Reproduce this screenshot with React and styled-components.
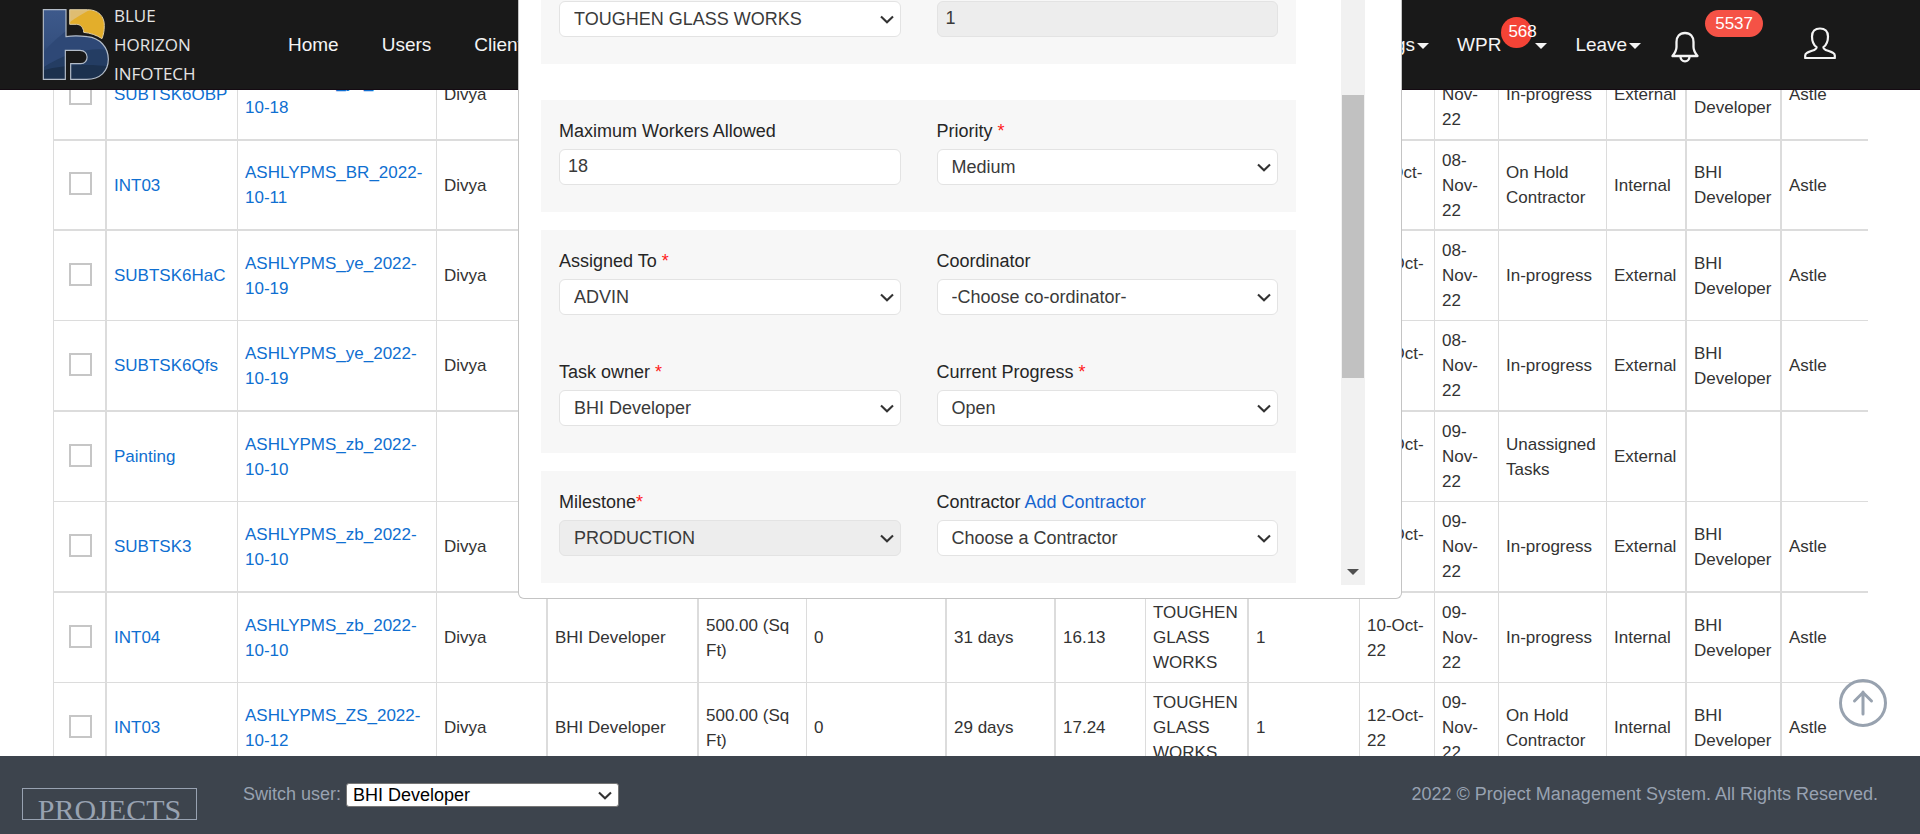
import React from "react";
import styled, { createGlobalStyle } from "styled-components";

const GlobalStyle = createGlobalStyle`
  *, *::before, *::after { box-sizing: border-box; }
  body {
    margin: 0;
    background: #fff;
    color: #333;
    font-family: Arial, "Liberation Sans", sans-serif;
    font-size: 18px;
    line-height: 27px;
  }
  a { color: inherit; text-decoration: none; }
`;

const Page = styled.div`
  height: 100vh;
  display: flex;
  flex-direction: column;
  overflow: hidden;
`;

/* ---------- header ---------- */

const Header = styled.header`
  position: fixed;
  inset: 0 0 auto 0;
  z-index: 2;
  height: 90px;
  padding: 0 84px 0 42px;
  display: flex;
  align-items: center;
  background: #191919;
  border-bottom: 1px solid #140a12;
  color: #f4f4f4;
  font-size: 19px;
`;

const Brand = styled.a`
  display: flex;
  align-items: center;
  gap: 4px;
  width: 246px;
`;

const BrandText = styled.span`
  color: #e4e4e4;
  font-family: "Open Sans", "Noto Sans", sans-serif;
  font-size: 17px;
  line-height: 29px;
`;

const NavGroup = styled.nav`
  height: 90px;
  display: flex;
  align-items: center;
  gap: ${(p) => p.$gap}px;
  margin-left: ${(p) => (p.$end ? "auto" : "0")};
`;

const NavItem = styled.a`
  height: 90px;
  display: flex;
  align-items: center;
  color: #f4f4f4;
  white-space: nowrap;
`;

const Caret = styled.span`
  margin: 3px 0 0 2px;
  border: 6px solid transparent;
  border-top-color: #f4f4f4;
  border-bottom: 0;
`;

const CountDot = styled.span`
  align-self: flex-start;
  width: 31px;
  height: 31px;
  margin-top: 17px;
  margin-right: 1px;
  padding-left: 7px;
  border-radius: 50%;
  background: #f44336;
  color: #fff;
  font-size: 17px;
  line-height: 30px;
`;

const CountPill = styled.span`
  align-self: flex-start;
  height: 27px;
  margin: 10px 0 0 6px;
  padding: 0 10px;
  border-radius: 14px;
  background: #f55246;
  color: #fff;
  font-size: 17px;
  line-height: 27px;
`;

const IconButton = styled.button`
  display: flex;
  padding: ${(p) => (p.$low ? "5px 0 0" : "0 0 4px")};
  border: 0;
  background: none;
  color: #f4f4f4;
  cursor: pointer;
`;

const Alerts = styled.div`
  height: 90px;
  display: flex;
  align-items: center;
  margin-left: 2px;
  margin-right: 13px;
`;

/* ---------- task table ---------- */

const Main = styled.main`
  flex: 1;
  min-height: 0;
  overflow: hidden;
  padding: 50px 52px 0 53px;
`;

const Table = styled.table`
  width: 100%;
  table-layout: fixed;
  border-collapse: separate;
  border-spacing: 0;
  border-left: 1px solid #dcdcdc;
  font-size: 17px;
  line-height: 25px;
`;

const Row = styled.tr`
  height: ${(p) => (p.$tall ? 91 : 90)}px;
`;

const Cell = styled.td`
  padding: 0 2px 0 7px;
  border: 0 solid #dcdcdc;
  border-bottom-width: ${(p) => p.$line}px;
  border-right-width: ${(p) => p.$rule}px;
  vertical-align: middle;
`;

const TaskLink = styled.a`
  color: #0f6fd1;
`;

const TickBox = styled.input`
  appearance: none;
  display: block;
  width: 23px;
  height: 23px;
  margin: 0 auto 3px 8px;
  border: 2px solid #c6c6c6;
  background: #fff;
`;

/* ---------- dialog ---------- */

const Dialog = styled.section`
  position: fixed;
  top: 0;
  left: 50%;
  z-index: 3;
  width: 884px;
  max-width: 100%;
  transform: translateX(-50%);
  display: flex;
  padding: 0 36px 13px 22px;
  background: #fff;
  border: 1px solid #c4c4c4;
  border-top: 0;
  border-radius: 0 0 6px 6px;
`;

const Form = styled.form`
  flex: 1;
  min-width: 0;
  margin: 0 45px 0 0;
  padding-bottom: 2px;
`;

const Panel = styled.div`
  display: grid;
  grid-template-columns: 1fr 1fr;
  gap: 44px 36px;
  margin-bottom: ${(p) => p.$after || 0}px;
  padding: ${(p) => (p.$cut ? 1 : 18)}px 18px 27px;
  background: #f7f7f7;
`;

const Field = styled.div`
  display: flex;
  flex-direction: column;
  gap: 4px;
  min-width: 0;
`;

const Label = styled.label`
  color: #262626;
`;

const Star = styled.span`
  color: #ff1a1a;
`;

const AddLink = styled.a`
  color: #1765cf;
`;

const TextBox = styled.input`
  width: 100%;
  height: 36px;
  padding: 0 8px 1px;
  border: 1px solid #e3e3e3;
  border-radius: 6px;
  background: #fff;
  color: #3a3a3a;
  font: inherit;
  &:disabled { background: #ededed; }
`;

const SelectFrame = styled.div`
  position: relative;
  display: grid;
  color: #333;
`;

const Select = styled.select`
  appearance: none;
  width: 100%;
  height: 36px;
  padding: 0 36px 0 14px;
  border: 1px solid #e3e3e3;
  border-radius: 6px;
  background: #fff;
  color: #3a3a3a;
  font: inherit;
  opacity: 1;
  &:disabled { background: #ededed; }
`;

const SelectArrow = styled.svg`
  position: absolute;
  right: 7px;
  top: 50%;
  width: 14px;
  height: 10px;
  margin-top: -4px;
  pointer-events: none;
`;

const ScrollTrack = styled.div`
  width: 24px;
  display: flex;
  flex-direction: column;
  align-items: center;
  background: #f1f1f1;
`;

const ScrollThumb = styled.div`
  width: 22px;
  height: 283px;
  margin-top: 95px;
  background: #c1c1c1;
`;

const ScrollArrow = styled.span`
  margin: auto 0 10px;
  border: 6px solid transparent;
  border-top-color: #505050;
  border-bottom: 0;
`;

/* ---------- footer ---------- */

const Footer = styled.footer`
  flex: none;
  height: 78px;
  display: flex;
  align-items: flex-start;
  padding: 25px 42px 0 22px;
  background: #3d444d;
  color: #98a2b1;
`;

const ProjectsTag = styled.a`
  width: 175px;
  height: 32px;
  margin-top: 7px;
  overflow: hidden;
  border: 1px solid #98a2b1;
  color: #98a2b1;
  font-family: "Times New Roman", "Liberation Serif", serif;
  font-size: 30px;
  line-height: 42px;
  text-align: center;
`;

const SwitchUser = styled.div`
  display: flex;
  align-items: center;
  gap: 5px;
  margin-left: 46px;
`;

const UserSelect = styled.select`
  appearance: none;
  width: 273px;
  height: 24px;
  padding: 0 24px 0 6px;
  border: 1px solid #767676;
  border-radius: 3px;
  background: #fff;
  color: #000;
  font: inherit;
  line-height: 20px;
`;

const Copyright = styled.span`
  margin-left: auto;
`;

const ToTop = styled.button`
  position: fixed;
  right: 33px;
  bottom: 107px;
  z-index: 1;
  display: flex;
  padding: 0;
  border: 0;
  background: none;
  cursor: pointer;
`;

/* ---------- drawings ---------- */

const Logo = () => (
  <svg width="68" height="74" viewBox="36 24 204 222" aria-hidden="true">
    <defs>
      <linearGradient id="blue" x1="0" y1="0" x2="0" y2="1">
        <stop offset="0" stopColor="#3e5a8c" />
        <stop offset="0.5" stopColor="#35507f" />
        <stop offset="1" stopColor="#1b304e" />
      </linearGradient>
      <clipPath id="bShape">
        <path d="M40 29H108V110C130 106 150 107 172 110C210 114 235 142 235 178C235 214 210 238 170 238H122V191H152C178 191 178 151 150 151H106V238H40Z" />
      </clipPath>
      <clipPath id="sunShape">
        <path d="M119 29H172C206 29 223 50 223 76C223 94 220 105 216 116C200 105 180 99 161 97C161 82 150 73 140 73H119Z" />
      </clipPath>
    </defs>
    <g clipPath="url(#bShape)">
      <rect x="36" y="24" width="204" height="222" fill="url(#blue)" />
      <path d="M36 165C60 130 85 112 112 90L240 110V180C170 160 90 170 36 205Z" fill="#2e4876" />
      <path d="M36 205C100 160 180 140 240 150V246H36Z" fill="#243d63" />
      <path d="M36 212C90 195 180 190 240 200V246H36Z" fill="#1c314e" />
    </g>
    <path d="M40 29H108V110C130 106 150 107 172 110C210 114 235 142 235 178C235 214 210 238 170 238H122V191H152C178 191 178 151 150 151H106V238H40Z" fill="none" stroke="#b3bcc8" strokeWidth="3.5" />
    <g clipPath="url(#sunShape)">
      <rect x="115" y="24" width="115" height="96" fill="#e3ae2b" />
      <path d="M115 24H190C165 38 140 50 115 70Z" fill="#dfbd72" />
    </g>
    <path d="M119 29H172C206 29 223 50 223 76C223 94 220 105 216 116C200 105 180 99 161 97C161 82 150 73 140 73H119Z" fill="none" stroke="#e0cfa4" strokeWidth="3" />
  </svg>
);

const Bell = () => (
  <svg width="28" height="32" viewBox="0 0 28 32" fill="none" stroke="currentColor" strokeWidth="2.3" strokeLinejoin="round" aria-hidden="true">
    <path d="M14 2C8.5 2 5.5 5.8 5.5 11V16C5.5 20 3.5 22.500 1.500 25H26.500C24.500 22.500 22.500 20 22.500 16V11C22.500 5.800 19.500 2 14 2Z" />
    <path d="M9.500 25.500C9.500 28.500 11.500 30.300 14 30.300C16.500 30.300 18.500 28.500 18.500 25.500" />
  </svg>
);

const Person = () => (
  <svg width="32" height="32" viewBox="0 0 32 32" fill="none" stroke="currentColor" strokeWidth="2.2" strokeLinejoin="round" aria-hidden="true">
    <path d="M16 1.500C11 1.500 8 4.500 8 9.500C8 14.500 9.500 18 12.600 20.200C12.600 22 11 22.800 8 23.800C4 25.200 1.200 26 1.200 28.500V31H30.800V28.500C30.800 26 28 25.200 24 23.800C21 22.800 19.400 22 19.400 20.200C22.500 18 24 14.500 24 9.500C24 4.500 21 1.500 16 1.500Z" />
  </svg>
);

const Chevron = () => (
  <SelectArrow viewBox="0 0 14 10" fill="none" stroke="currentColor" strokeWidth="2.1" aria-hidden="true">
    <path d="M1 1.500L7 7.300L13 1.500" />
  </SelectArrow>
);

/* ---------- parts ---------- */

const SelectField = ({ id, label, required, tight, extra, value, disabled }) => (
  <Field>
    {label && (
      <div>
        <Label htmlFor={id}>
          {label}
          {required && <Star>{tight ? "*" : " *"}</Star>}
        </Label>
        {extra && <> <AddLink href="#add">{extra}</AddLink></>}
      </div>
    )}
    <SelectFrame>
      <Select id={id} aria-label={label ? undefined : "Category"} disabled={disabled}>
        <option>{value}</option>
      </Select>
      <Chevron />
    </SelectFrame>
  </Field>
);

/* column width and the thickness of the rule on its right */
const columns = [
  [53, 2], [131, 1], [199, 1], [111, 2], [151, 2], [108, 1], [140, 2], [109, 2],
  [90, 1], [103, 2], [111, 1], [75, 1], [64, 1], [108, 1], [80, 2], [95, 2], [86, 0],
];

/* thickness of the rule under each row */
const rowLines = [2, 2, 1, 2, 1, 2, 1, 2];

const dev = "BHI Developer";
const work = "TOUGHEN GLASS WORKS";
const size = "500.00 (Sq Ft)";

const tasks = [
  ["SUBTSK6OBP", "ASHLYPMS_ye_2022-10-18", "Divya", dev, size, "0", "31 days", "16.13", work, "1", "08-Oct-22", "08-Nov-22", "In-progress", "External", dev, "Astle"],
  ["INT03", "ASHLYPMS_BR_2022-10-11", "Divya", dev, size, "0", "29 days", "17.24", work, "1", "11-Oct-22", "08-Nov-22", "On Hold Contractor", "Internal", dev, "Astle"],
  ["SUBTSK6HaC", "ASHLYPMS_ye_2022-10-19", "Divya", dev, size, "0", "31 days", "16.13", work, "1", "10-Oct-22", "08-Nov-22", "In-progress", "External", dev, "Astle"],
  ["SUBTSK6Qfs", "ASHLYPMS_ye_2022-10-19", "Divya", dev, size, "0", "31 days", "16.13", work, "1", "10-Oct-22", "08-Nov-22", "In-progress", "External", dev, "Astle"],
  ["Painting", "ASHLYPMS_zb_2022-10-10", "", "", size, "0", "31 days", "16.13", work, "1", "10-Oct-22", "09-Nov-22", "Unassigned Tasks", "External", "", ""],
  ["SUBTSK3", "ASHLYPMS_zb_2022-10-10", "Divya", dev, size, "0", "31 days", "16.13", work, "1", "10-Oct-22", "09-Nov-22", "In-progress", "External", dev, "Astle"],
  ["INT04", "ASHLYPMS_zb_2022-10-10", "Divya", dev, size, "0", "31 days", "16.13", work, "1", "10-Oct-22", "09-Nov-22", "In-progress", "Internal", dev, "Astle"],
  ["INT03", "ASHLYPMS_ZS_2022-10-12", "Divya", dev, size, "0", "29 days", "17.24", work, "1", "12-Oct-22", "09-Nov-22", "On Hold Contractor", "Internal", dev, "Astle"],
];

export default function App() {
  return (
    <Page>
      <GlobalStyle />
      <Header>
        <Brand href="#home">
          <Logo />
          <BrandText>BLUE<br />HORIZON<br />INFOTECH</BrandText>
        </Brand>
        <NavGroup $gap={43}>
          <NavItem href="#home">Home</NavItem>
          <NavItem href="#users">Users</NavItem>
          <NavItem href="#clients">Clients</NavItem>
        </NavGroup>
        <NavGroup $gap={28} $end>
          <NavItem href="#settings">Settings<Caret /></NavItem>
          <NavItem href="#wpr">WPR<CountDot>568</CountDot><Caret /></NavItem>
          <NavItem href="#leave">Leave<Caret /></NavItem>
          <Alerts>
            <IconButton type="button" aria-label="Notifications" $low><Bell /></IconButton>
            <CountPill>5537</CountPill>
          </Alerts>
          <IconButton type="button" aria-label="Account"><Person /></IconButton>
        </NavGroup>
      </Header>

      <Main>
        <Table>
          <colgroup>
            {columns.map(([width], i) => <col key={i} width={width} />)}
          </colgroup>
          <tbody>
            {tasks.map((task, r) => (
              <Row key={r} $tall={r === 0 || (r > 1 && r % 2 === 1)}>
                <Cell $rule={2} $line={rowLines[r]}>
                  <TickBox type="checkbox" aria-label={`Select ${task[0]}`} />
                </Cell>
                {task.map((text, c) => (
                  <Cell key={c} $rule={columns[c + 1][1]} $line={rowLines[r]}>
                    {c < 2 ? <TaskLink href="#task">{text}</TaskLink> : text}
                  </Cell>
                ))}
              </Row>
            ))}
          </tbody>
        </Table>
      </Main>

      <Dialog role="dialog" aria-label="Edit task">
        <Form>
          <Panel $cut $after={36}>
            <SelectField id="category" value="TOUGHEN GLASS WORKS" />
            <Field><TextBox aria-label="Quantity" defaultValue="1" disabled /></Field>
          </Panel>
          <Panel $after={18}>
            <Field>
              <Label htmlFor="workers">Maximum Workers Allowed</Label>
              <TextBox id="workers" defaultValue="18" />
            </Field>
            <SelectField id="priority" label="Priority" required value="Medium" />
          </Panel>
          <Panel $after={18}>
            <SelectField id="assigned" label="Assigned To" required value="ADVIN" />
            <SelectField id="coordinator" label="Coordinator" value="-Choose co-ordinator-" />
            <SelectField id="owner" label="Task owner" required value="BHI Developer" />
            <SelectField id="progress" label="Current Progress" required value="Open" />
          </Panel>
          <Panel>
            <SelectField id="milestone" label="Milestone" required tight value="PRODUCTION" disabled />
            <SelectField id="contractor" label="Contractor" extra="Add Contractor" value="Choose a Contractor" />
          </Panel>
        </Form>
        <ScrollTrack>
          <ScrollThumb />
          <ScrollArrow />
        </ScrollTrack>
      </Dialog>

      <ToTop type="button" aria-label="Back to top">
        <svg width="48" height="48" viewBox="0 0 48 48" fill="none" stroke="#98a2af" strokeWidth="3" aria-hidden="true">
          <circle cx="24" cy="24" r="22.500" />
          <path d="M24 35V13M15.500 22L24 13.500L32.500 22" strokeLinecap="round" />
        </svg>
      </ToTop>

      <Footer>
        <ProjectsTag href="#projects">PROJECTS</ProjectsTag>
        <SwitchUser>
          <label htmlFor="switch">Switch user:</label>
          <SelectFrame>
            <UserSelect id="switch">
              <option>BHI Developer</option>
            </UserSelect>
            <Chevron />
          </SelectFrame>
        </SwitchUser>
        <Copyright>2022 © Project Management System. All Rights Reserved.</Copyright>
      </Footer>
    </Page>
  );
}
